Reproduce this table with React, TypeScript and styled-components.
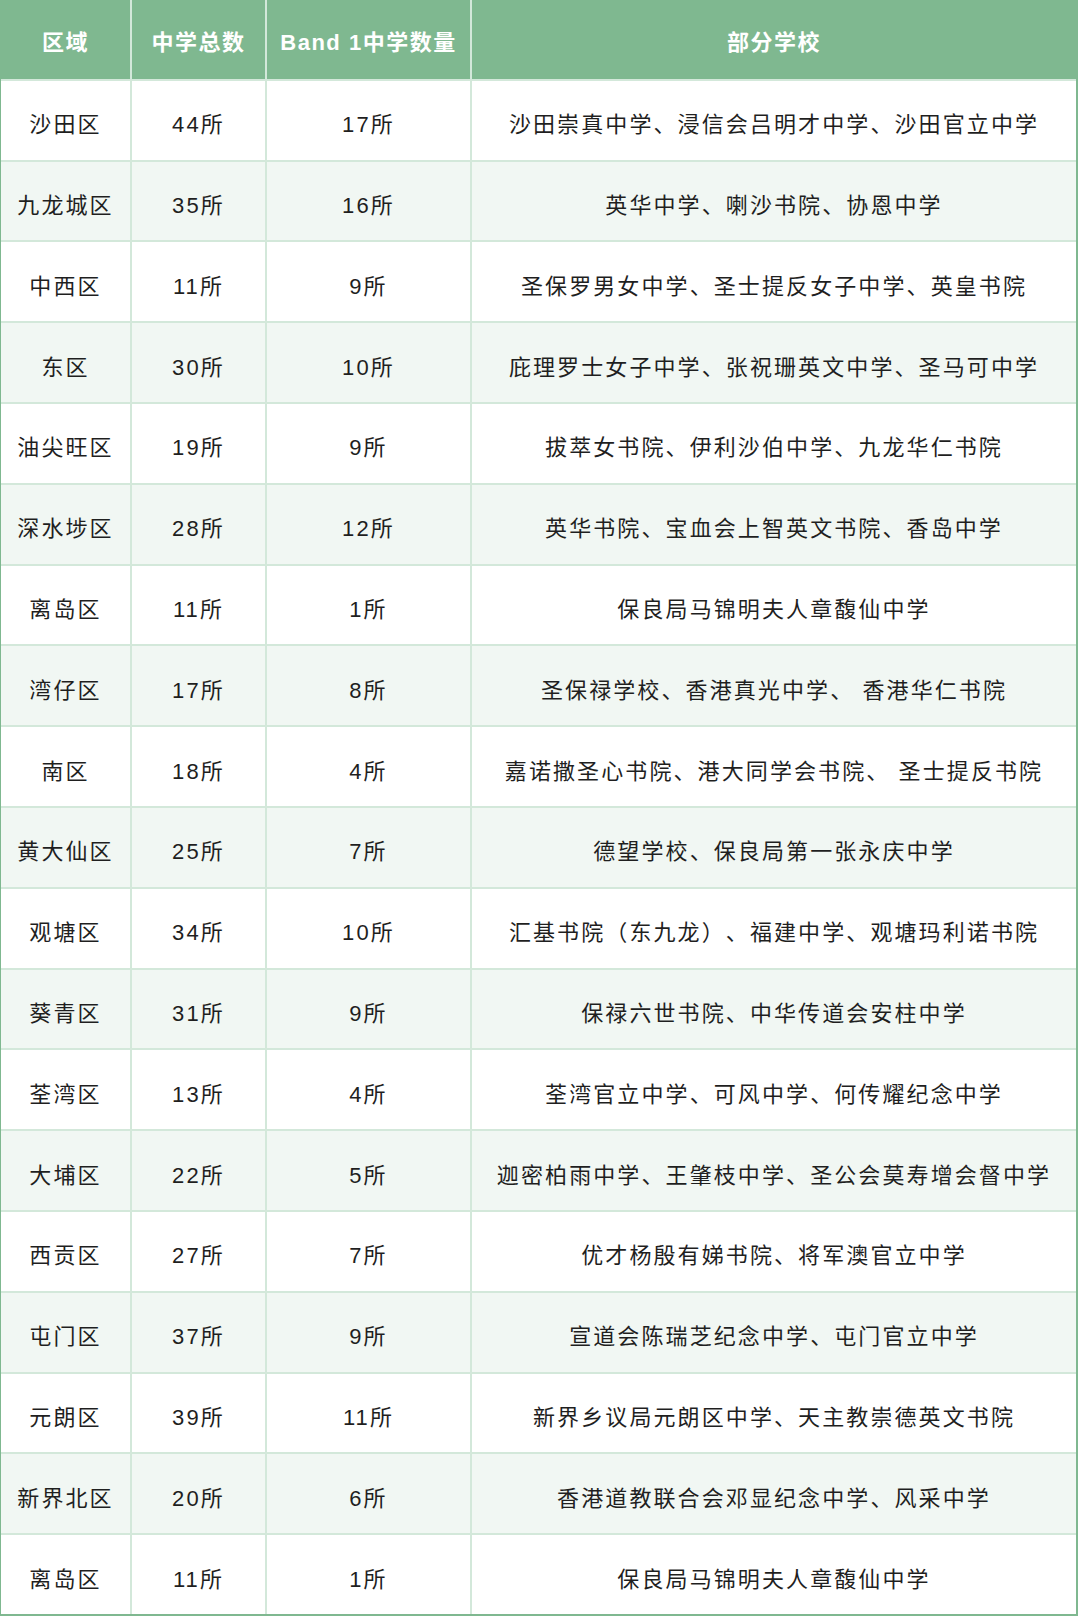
import React from 'react';
import styled, { createGlobalStyle } from 'styled-components';

const GlobalStyle = createGlobalStyle`
	html, body {
		margin: 0;
		padding: 0;
		background: #ffffff;
	}
`;

const rows: [string, string, string, string][] = [
	['沙田区', '44所', '17所', '沙田崇真中学、浸信会吕明才中学、沙田官立中学'],
	['九龙城区', '35所', '16所', '英华中学、喇沙书院、协恩中学'],
	['中西区', '11所', '9所', '圣保罗男女中学、圣士提反女子中学、英皇书院'],
	['东区', '30所', '10所', '庇理罗士女子中学、张祝珊英文中学、圣马可中学'],
	['油尖旺区', '19所', '9所', '拔萃女书院、伊利沙伯中学、九龙华仁书院'],
	['深水埗区', '28所', '12所', '英华书院、宝血会上智英文书院、香岛中学'],
	['离岛区', '11所', '1所', '保良局马锦明夫人章馥仙中学'],
	['湾仔区', '17所', '8所', '圣保禄学校、香港真光中学、 香港华仁书院'],
	['南区', '18所', '4所', '嘉诺撒圣心书院、港大同学会书院、 圣士提反书院'],
	['黄大仙区', '25所', '7所', '德望学校、保良局第一张永庆中学'],
	['观塘区', '34所', '10所', '汇基书院（东九龙）、福建中学、观塘玛利诺书院'],
	['葵青区', '31所', '9所', '保禄六世书院、中华传道会安柱中学'],
	['荃湾区', '13所', '4所', '荃湾官立中学、可风中学、何传耀纪念中学'],
	['大埔区', '22所', '5所', '迦密柏雨中学、王肇枝中学、圣公会莫寿增会督中学'],
	['西贡区', '27所', '7所', '优才杨殷有娣书院、将军澳官立中学'],
	['屯门区', '37所', '9所', '宣道会陈瑞芝纪念中学、屯门官立中学'],
	['元朗区', '39所', '11所', '新界乡议局元朗区中学、天主教崇德英文书院'],
	['新界北区', '20所', '6所', '香港道教联合会邓显纪念中学、风采中学'],
	['离岛区', '11所', '1所', '保良局马锦明夫人章馥仙中学'],
];

const headers = ['区域', '中学总数', 'Band 1中学数量', '部分学校'];

const Sheet = styled.div`
	box-sizing: border-box;
	width: 1078px;
	height: 1616px;
	display: grid;
	grid-template-columns: 129px 133px 203px 1fr;
	grid-template-rows: repeat(20, 1fr);
	gap: 2px;
	background: #d3e8da;
	border-left: 1px solid #7fb890;
	border-right: 2px solid #7fb890;
	border-bottom: 2px solid #7fb890;
	font-family: 'Liberation Sans', 'Noto Sans CJK SC', sans-serif;
	text-spacing-trim: space-all;
`;

const HeadCell = styled.div`
	display: flex;
	align-items: center;
	justify-content: center;
	background: #7fb890;
	color: #ffffff;
	font-size: 22px;
	font-weight: 700;
	letter-spacing: 1.5px;
	padding-top: 2px;
	box-sizing: border-box;
`;

const Cell = styled.div<{ $alt: boolean }>`
	display: flex;
	align-items: center;
	justify-content: center;
	background: ${({ $alt }) => ($alt ? '#f1f7f3' : '#ffffff')};
	color: #1f1f1f;
	font-size: 22px;
	letter-spacing: 2.1px;
	white-space: nowrap;
	padding-top: 4px;
	box-sizing: border-box;
`;

export default function App() {
	return (
		<>
			<GlobalStyle />
			<Sheet>
				{headers.map((h) => (
					<HeadCell key={h}>{h}</HeadCell>
				))}
				{rows.map((r, i) =>
					r.map((v, j) => (
						<Cell key={`${i}-${j}`} $alt={i % 2 === 1}>
							{v}
						</Cell>
					))
				)}
			</Sheet>
		</>
	);
}
